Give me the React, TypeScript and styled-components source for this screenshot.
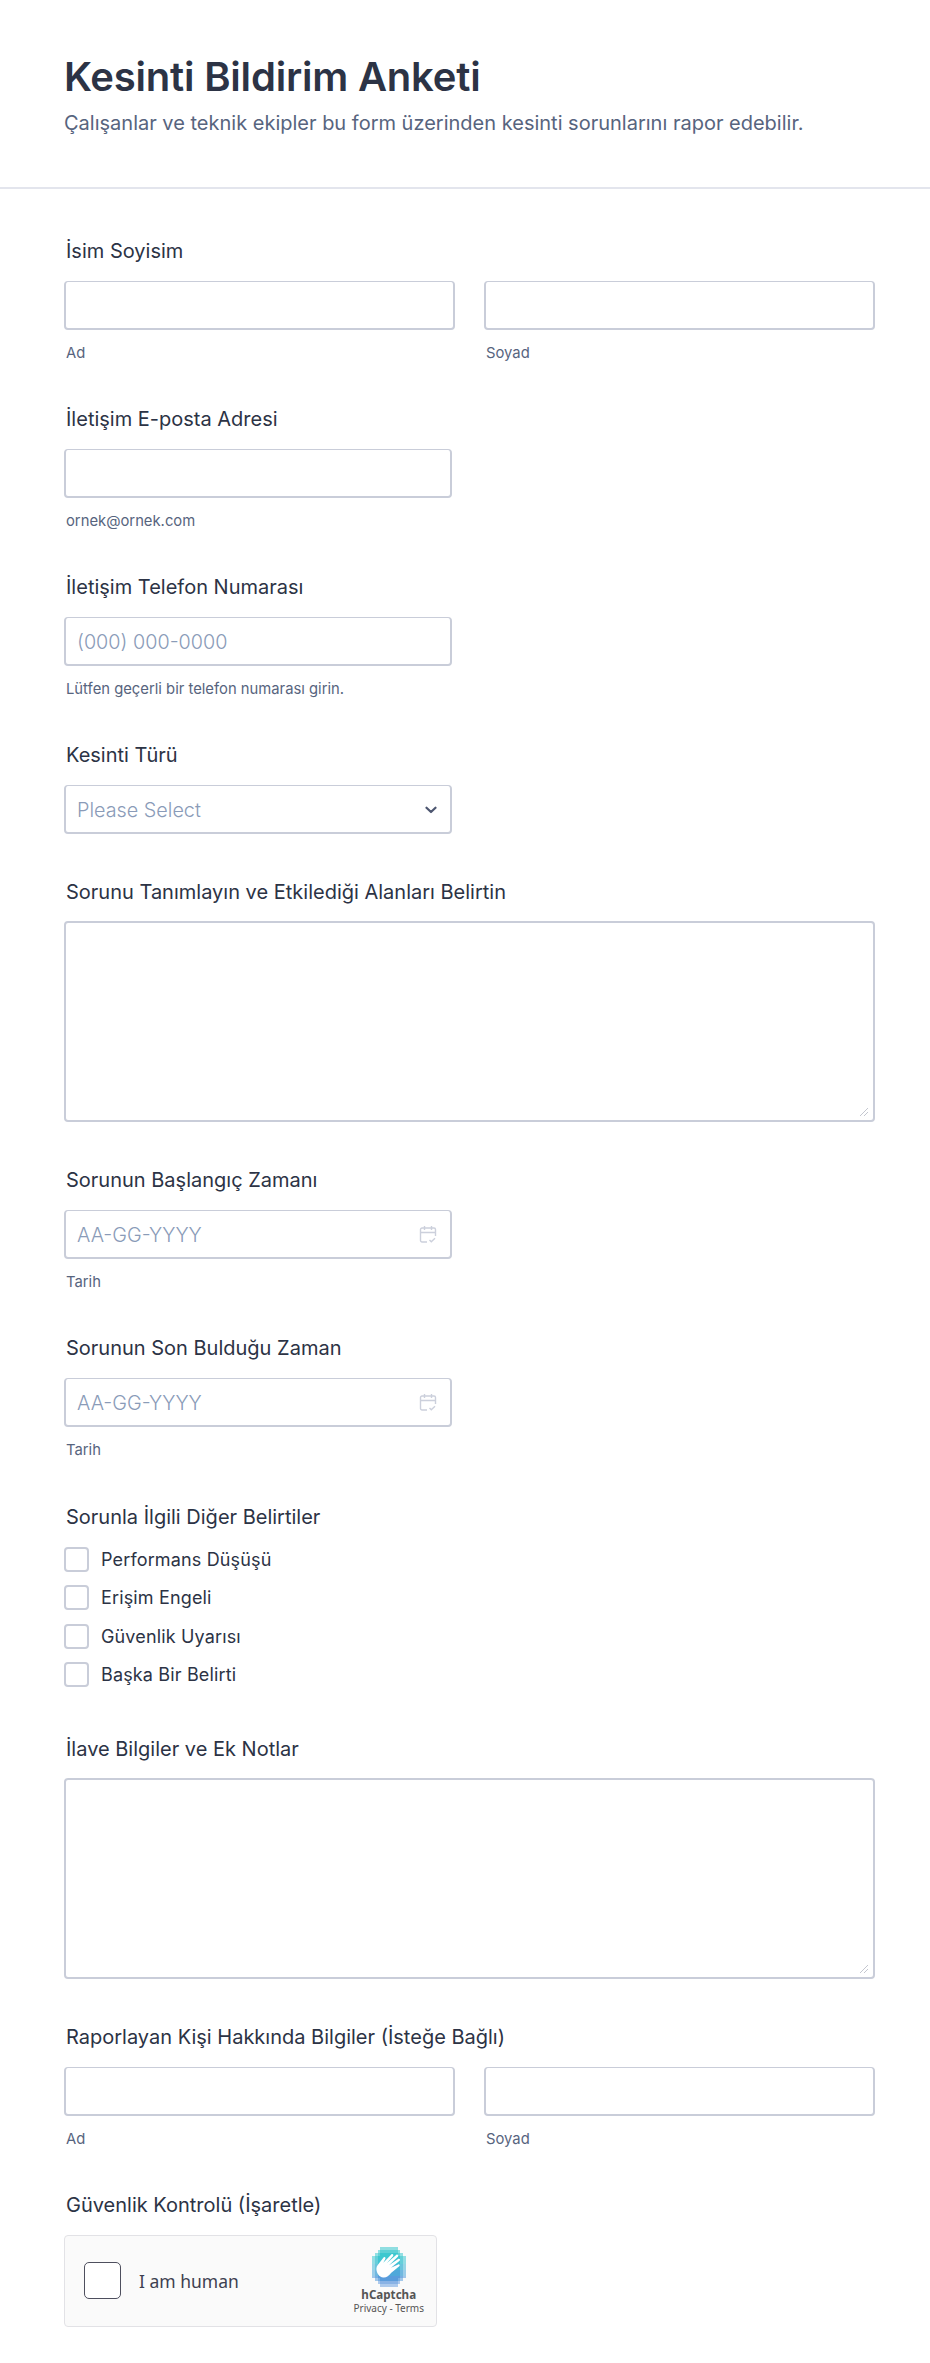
import styled, { createGlobalStyle } from 'styled-components';

const GlobalStyle = createGlobalStyle`
  html, body {
    margin: 0;
    padding: 0;
    background: #fff;
    font-family: Inter, "Noto Sans", sans-serif;
  }
  * { box-sizing: border-box; }
`;

const CalendarIcon = () => (
  <svg width="18" height="19" viewBox="0 0 18 19" fill="none" stroke="#ccd0dc" strokeWidth="1.4">
    <path d="M8 17H3a1.5 1.5 0 0 1-1.5-1.5V4.5A1.5 1.5 0 0 1 3 3h12a1.5 1.5 0 0 1 1.5 1.5V11" />
    <path d="M1.5 7.5h15M5.5 1v4M12.5 1v4" />
    <path d="M10.5 15l1.8 1.8L16 13.2" />
  </svg>
);

const ChevronIcon = () => (
  <svg width="12" height="8" viewBox="0 0 12 8" fill="none" stroke="#4d5670" strokeWidth="2.2" strokeLinecap="round" strokeLinejoin="round">
    <path d="M1.5 1.7L6 6l4.5-4.3" />
  </svg>
);

const ResizeGrip = () => (
  <svg width="10" height="10" viewBox="0 0 10 10" stroke="#c4c7d0" strokeWidth="1">
    <path d="M1 9L9 1M5 9L9 5" />
  </svg>
);

// logo is a stepped octagon of cells, fading from teal at the top to blue at the bottom
const logoRows = ['#37c6cc', '#3cc8cf', '#40c4d2', '#45b8d6', '#4fa8da', '#5a9cdc', '#6ca0e0'];

const HCaptchaLogo = () => {
  const cells: { x: number; y: number; fill: string; opacity: number }[] = [];
  const widths = [3, 4, 5, 6, 6, 6, 6, 6, 6, 6, 6, 5, 4, 3];
  for (let y = 0; y < 14; y++) {
    const half = widths[y];
    for (let x = 7 - half; x < 7 + half; x++) {
      const fromEdge = half - Math.abs(x - 6.5);
      const vEdge = Math.min(y, 13 - y);
      const opacity = fromEdge < 1 || vEdge < 1 ? 0.55 : fromEdge < 2 || vEdge < 2 ? 0.8 : 1;
      cells.push({ x, y, fill: logoRows[Math.min(6, Math.floor(y / 2))], opacity });
    }
  }
  return (
    <svg width="40" height="40" viewBox="0 0 14 14" shapeRendering="crispEdges">
      {cells.map(c => (
        <rect key={`${c.x}-${c.y}`} x={c.x} y={c.y} width="1" height="1" fill={c.fill} opacity={c.opacity} />
      ))}
      <path
        shapeRendering="auto"
        fill="#fff"
        d="M2.6 7.6c0-1 .7-1.6 1.2-2.3l1.3-1.6c.3-.4.9 0 .6.5L5 5.5l2.8-2.9c.4-.4 1 .1.6.6L6.2 5.7l3.3-2.9c.5-.4 1 .2.6.6L7 6.4l3.2-2.2c.5-.3.9.3.5.6L7.7 7.3l2.5-1.2c.5-.2.8.4.4.6L7.8 9c-.9 1.1-1.7 1.8-2.8 1.7C3.5 10.5 2.6 9.1 2.6 7.6z"
      />
    </svg>
  );
};

const Page = styled.div`
  width: 930px;
  height: 2363px;
  overflow: hidden;
  background: #fff;
`;

const Header = styled.header`
  height: 189px;
  padding: 51px 64px 0;
  border-bottom: 2px solid #e3e5ed;
`;

const Title = styled.h1`
  margin: 0;
  font-size: 40px;
  line-height: 52px;
  font-weight: 600;
  letter-spacing: -0.2px;
  color: #2c3345;
`;

const Subtitle = styled.p`
  margin: 7px 0 0;
  font-size: 20px;
  line-height: 26px;
  font-weight: 400;
  color: #57647e;
`;

const Form = styled.main`
  padding: 50px 55px 0 64px;
  display: flex;
  flex-direction: column;
`;

const Field = styled.section<{ $gap?: number }>`
  margin-bottom: ${p => p.$gap ?? 46}px;
`;

const Label = styled.div`
  padding-left: 2px;
  font-size: 20px;
  line-height: 24px;
  font-weight: 400;
  color: #2c3345;
  margin-bottom: 18px;
`;

const Row = styled.div`
  display: grid;
  grid-template-columns: 391px 391px;
  column-gap: 29px;
`;

const Box = styled.div<{ $width?: number }>`
  position: relative;
  width: ${p => (p.$width ? `${p.$width}px` : '100%')};
  height: 49px;
  padding: 1px 13px 0 11px;
  display: flex;
  align-items: center;
  justify-content: space-between;
  background: #fff;
  border: 2px solid #c9cdd9;
  border-top-width: 1.5px;
  border-radius: 4px;
  font-size: 19.8px;
  font-weight: 300;
  color: #8a9bb8;
`;

const TextArea = styled.div`
  position: relative;
  width: 811px;
  height: 201px;
  margin-top: -1px;
  background: #fff;
  border: 2px solid #c9cdd9;
  border-radius: 4px;
`;

const Grip = styled.span`
  position: absolute;
  right: 4px;
  bottom: 3px;
  display: flex;
`;

const Sublabel = styled.div`
  padding-left: 2px;
  margin-top: 15px;
  font-size: 14.8px;
  line-height: 16px;
  color: #57647e;
`;

const CheckList = styled.div`
  display: flex;
  flex-direction: column;
  gap: 13.3px;
  margin: 1px 0 4px;
`;

const CheckRow = styled.div`
  display: flex;
  align-items: center;
  gap: 12px;
  height: 25px;
  font-size: 18px;
  letter-spacing: 0.15px;
  color: #2c3345;
`;

const CheckBox = styled.span`
  width: 25px;
  height: 25px;
  border: 2px solid #c9cdd9;
  border-radius: 4px;
  background: #fff;
`;

const Captcha = styled.div`
  width: 373px;
  height: 92px;
  padding: 0 12px 0 19px;
  display: flex;
  align-items: center;
  background-color: #fafafa;
  background-image: radial-gradient(#eeeeee 0.6px, transparent 0.7px);
  background-size: 4px 4px;
  border: 1px solid #e2e2e6;
  border-radius: 4px;
  font-family: "Noto Sans", sans-serif;
`;

const CaptchaBox = styled.span`
  width: 37px;
  height: 37px;
  border: 1.5px solid #4e4f5e;
  border-radius: 5px;
  background: #fff;
`;

const CaptchaText = styled.span`
  margin-left: 18px;
  flex: 1;
  font-size: 17.5px;
  color: #3e3f50;
`;

const CaptchaBrand = styled.div`
  display: flex;
  flex-direction: column;
  align-items: center;
  color: #555;
`;

const BrandName = styled.span`
  font-size: 11.6px;
  line-height: 15px;
  font-weight: 700;
`;

const BrandLinks = styled.span`
  font-size: 10px;
  line-height: 13px;
`;

const NameField = ({ label }: { label: string }) => (
  <Field>
    <Label>{label}</Label>
    <Row>
      <div>
        <Box />
        <Sublabel>Ad</Sublabel>
      </div>
      <div>
        <Box />
        <Sublabel>Soyad</Sublabel>
      </div>
    </Row>
  </Field>
);

const DateField = ({ label, gap }: { label: string; gap?: number }) => (
  <Field $gap={gap}>
    <Label>{label}</Label>
    <Box $width={388}>
      AA-GG-YYYY
      <CalendarIcon />
    </Box>
    <Sublabel>Tarih</Sublabel>
  </Field>
);

const symptoms = ['Performans Düşüşü', 'Erişim Engeli', 'Güvenlik Uyarısı', 'Başka Bir Belirti'];

export default function App() {
  return (
    <Page>
      <GlobalStyle />
      <Header>
        <Title>Kesinti Bildirim Anketi</Title>
        <Subtitle>Çalışanlar ve teknik ekipler bu form üzerinden kesinti sorunlarını rapor edebilir.</Subtitle>
      </Header>
      <Form>
        <NameField label="İsim Soyisim" />
        <Field>
          <Label>İletişim E-posta Adresi</Label>
          <Box $width={388} />
          <Sublabel>ornek@ornek.com</Sublabel>
        </Field>
        <Field>
          <Label>İletişim Telefon Numarası</Label>
          <Box $width={388}>(000) 000-0000</Box>
          <Sublabel>Lütfen geçerli bir telefon numarası girin.</Sublabel>
        </Field>
        <Field>
          <Label>Kesinti Türü</Label>
          <Box $width={388}>
            Please Select
            <ChevronIcon />
          </Box>
        </Field>
        <Field>
          <Label>Sorunu Tanımlayın ve Etkilediği Alanları Belirtin</Label>
          <TextArea>
            <Grip>
              <ResizeGrip />
            </Grip>
          </TextArea>
        </Field>
        <DateField label="Sorunun Başlangıç Zamanı" />
        <DateField label="Sorunun Son Bulduğu Zaman" gap={47} />
        <Field>
          <Label>Sorunla İlgili Diğer Belirtiler</Label>
          <CheckList>
            {symptoms.map(s => (
              <CheckRow key={s}>
                <CheckBox />
                {s}
              </CheckRow>
            ))}
          </CheckList>
        </Field>
        <Field>
          <Label>İlave Bilgiler ve Ek Notlar</Label>
          <TextArea>
            <Grip>
              <ResizeGrip />
            </Grip>
          </TextArea>
        </Field>
        <NameField label="Raporlayan Kişi Hakkında Bilgiler (İsteğe Bağlı)" />
        <Field>
          <Label>Güvenlik Kontrolü (İşaretle)</Label>
          <Captcha>
            <CaptchaBox />
            <CaptchaText>I am human</CaptchaText>
            <CaptchaBrand>
              <HCaptchaLogo />
              <BrandName>hCaptcha</BrandName>
              <BrandLinks>Privacy - Terms</BrandLinks>
            </CaptchaBrand>
          </Captcha>
        </Field>
      </Form>
    </Page>
  );
}
